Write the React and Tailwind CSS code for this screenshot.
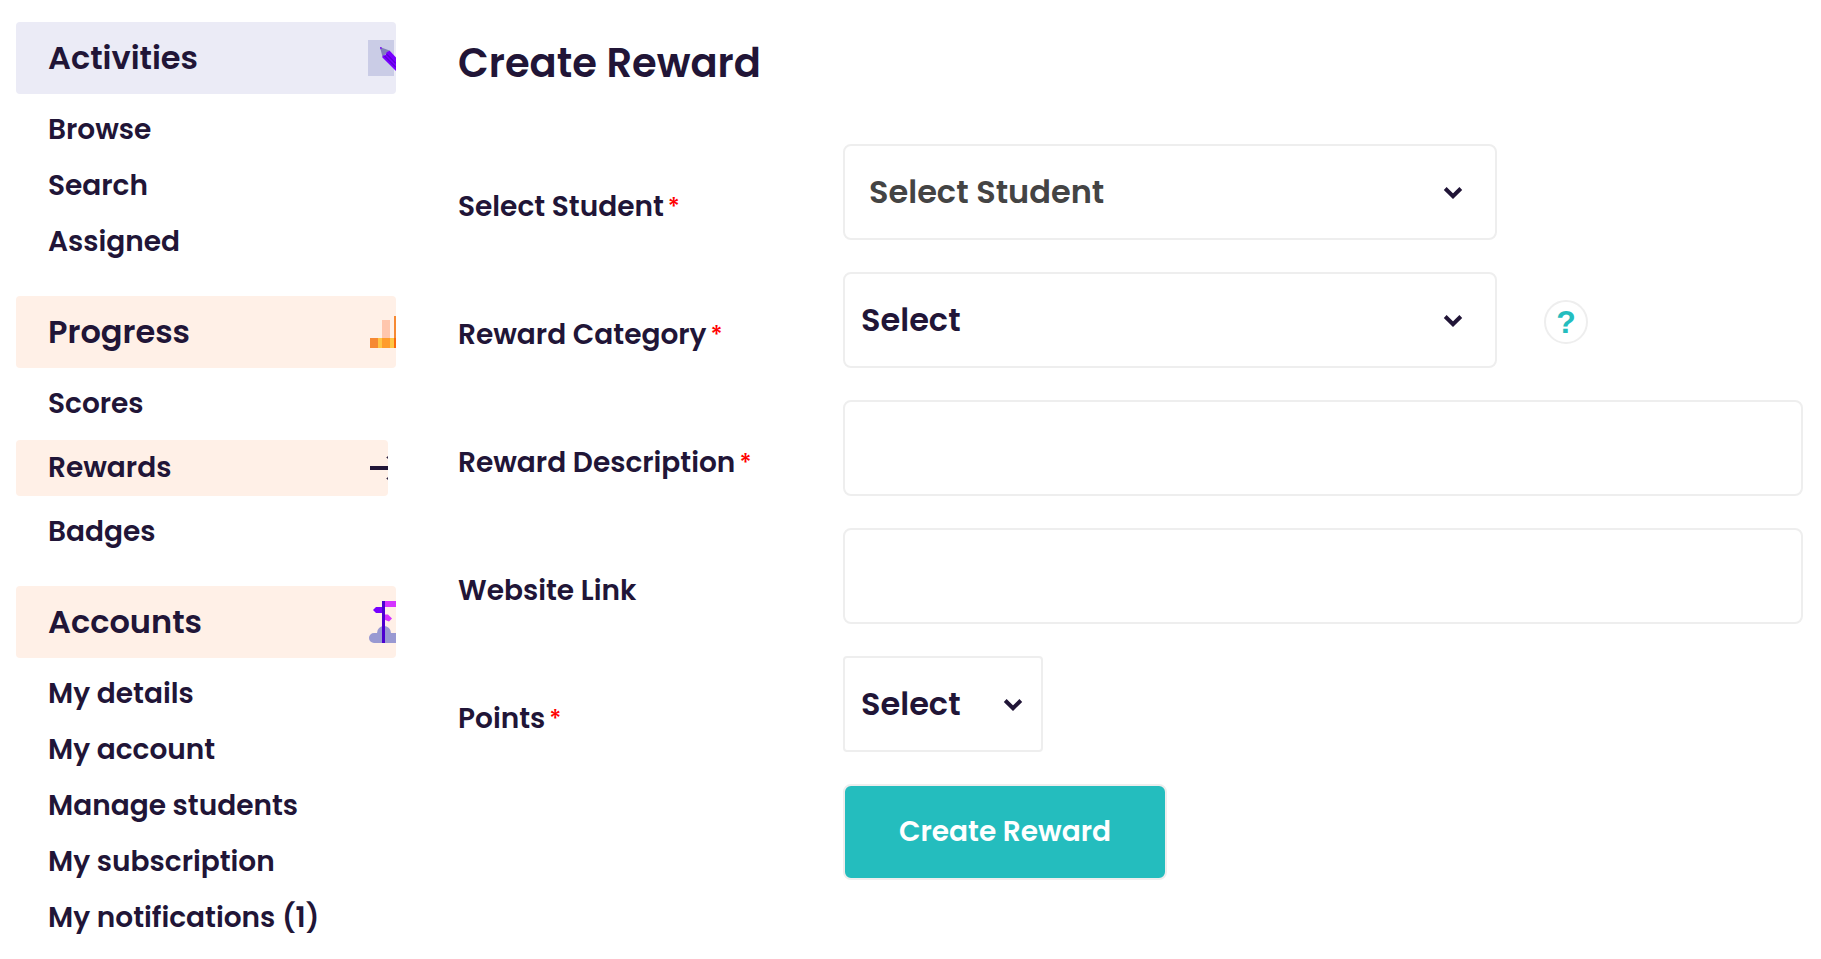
import React from "react";

function PencilIcon() {
  return (
    <svg className="h-[72px] w-7 shrink-0" viewBox="0 0 28 72" aria-hidden="true">
      <rect x="0" y="18" width="26" height="36" fill="#cacce6" />
      <path d="M12 25 21.5 28.5 14.5 35Z" fill="#8080b8" />
      <path d="M12 25 14.2 25.8 12.6 27.4Z" fill="#7700ff" />
      <path d="M18.5 30.5 21.5 28.5 28 35.5V49L14.2 35.2 15 33.5 17.5 33Z" fill="#7700ff" />
      <path d="M18.5 32 28 41.5M16.5 34 28 45.5" stroke="#4c00b8" strokeWidth="1" />
    </svg>
  );
}

function ChartIcon() {
  return (
    <svg className="h-[72px] w-7 shrink-0" viewBox="0 0 28 72" shapeRendering="crispEdges" aria-hidden="true">
      <rect x="2" y="42" width="26" height="10" fill="#ffc545" />
      <rect x="2" y="42" width="8" height="10" fill="#f68933" />
      <rect x="14" y="42" width="8" height="10" fill="#ff9c2c" />
      <rect x="14" y="24" width="8" height="18" fill="#ffc6ad" />
      <rect x="26" y="20" width="2" height="22" fill="#f68933" />
      <rect x="26" y="42" width="2" height="10" fill="#f9690e" />
    </svg>
  );
}

function SignpostIcon() {
  return (
    <svg className="h-[72px] w-7 shrink-0" viewBox="0 0 28 72" aria-hidden="true">
      <path d="M6 57a5 5 0 0 1 0-10h3a7 7 0 0 1 14 0h5v10Z" fill="#9999d2" />
      <rect x="17" y="15" width="11" height="6" fill="#d433ff" />
      <path d="M16 28.5 20 28.5 24 32.5 21 35.5 16 33.5Z" fill="#d433ff" />
      <path d="M15 21H8L5 24 8 27H15Z" fill="#7700ff" />
      <rect x="14" y="15" width="3" height="42" fill="#4c00d0" />
    </svg>
  );
}

function ArrowIcon() {
  return (
    <svg className="h-14 w-[18px] shrink-0" viewBox="0 0 18 56" aria-hidden="true">
      <path d="M0 26H18V30H0Z" fill="#211537" />
      <path d="M17 17.5 18 16.5V18.5ZM17 38.5 18 37.5V39.5Z" stroke="#211537" fill="#211537" />
    </svg>
  );
}

const sections = [
  { title: "Activities", tint: "bg-[#ebebf6]", Icon: PencilIcon, items: ["Browse", "Search", "Assigned"] },
  { title: "Progress", tint: "bg-[#fff0e7]", Icon: ChartIcon, items: ["Scores", "Rewards", "Badges"], active: "Rewards" },
  {
    title: "Accounts",
    tint: "bg-[#fff0e7]",
    Icon: SignpostIcon,
    items: ["My details", "My account", "Manage students", "My subscription", "My notifications (1)"],
  },
];

function Sidebar() {
  return (
    <nav className="flex w-[380px] shrink-0 flex-col gap-[26px]">
      {sections.map(({ title, tint, Icon, items, active }) => (
        <section key={title}>
          <h2 className={`flex h-[72px] items-center justify-between overflow-hidden rounded pl-8 text-[32px] font-semibold ${tint}`}>
            {title}
            <Icon />
          </h2>
          <ul className="mt-2">
            {items.map((item) =>
              item === active ? (
                <li key={item} className="my-2 mr-2">
                  <a href="#" aria-current="page" className="flex h-14 items-center justify-between overflow-hidden rounded bg-[#fff0e7] pl-8">
                    {item}
                    <ArrowIcon />
                  </a>
                </li>
              ) : (
                <li key={item}>
                  <a href="#" className="flex h-14 items-center pl-8">
                    {item}
                  </a>
                </li>
              )
            )}
          </ul>
        </section>
      ))}
    </nav>
  );
}

function Row({ label, id, required, children }) {
  return (
    <div className="flex items-center">
      <label htmlFor={id} className="w-[385px] shrink-0 pt-[30px]">
        {label}
        {required && <span className="ml-1 text-2xl font-medium text-[#ff0000]">*</span>}
      </label>
      {children}
    </div>
  );
}

function SelectBox({ id, text, box, field, chevron }) {
  return (
    <div className={`relative ${box}`}>
      <select id={id} className={`h-24 w-full appearance-none border-2 border-[#eeeeee] bg-white text-[32px] font-semibold ${field}`}>
        <option>{text}</option>
      </select>
      <svg className={`pointer-events-none absolute top-[43px] h-3 w-5 ${chevron}`} viewBox="0 0 20 12" fill="none" aria-hidden="true">
        <path d="M2.2 1.5 10 9.2 17.8 1.5" stroke="#211537" strokeWidth="4" />
      </svg>
    </div>
  );
}

const inputClass = "h-24 min-w-0 flex-1 rounded-lg border-2 border-[#eeeeee] bg-white px-4 text-[32px] font-semibold";

export default function App() {
  return (
    <div className="flex gap-[62px] bg-white pt-[22px] pr-[18px] pb-[13px] pl-4 font-['Poppins','Inter',sans-serif] text-[28px] leading-10 font-semibold text-[#211537]">
      <Sidebar />
      <main className="min-w-0 flex-1 pt-4">
        <h1 className="text-[40px] leading-[50px] font-semibold">Create Reward</h1>
        <form className="mt-14 flex flex-col gap-8" onSubmit={(e) => e.preventDefault()}>
          <Row label="Select Student" id="student" required>
            <SelectBox id="student" text="Select Student" box="w-[654px]" field="rounded-lg pl-6 text-[#444444]" chevron="right-[34px]" />
          </Row>
          <Row label="Reward Category" id="category" required>
            <SelectBox id="category" text="Select" box="w-[654px]" field="rounded-lg pl-4" chevron="right-[34px]" />
            <button
              type="button"
              aria-label="Help"
              className="mt-1 ml-[47px] flex size-11 items-center justify-center rounded-full border-2 border-[#eeeeee] font-['Liberation_Sans',sans-serif] text-[32px] font-bold text-[#24bdbe]"
            >
              ?
            </button>
          </Row>
          <Row label="Reward Description" id="description" required>
            <input id="description" type="text" className={inputClass} />
          </Row>
          <Row label="Website Link" id="link">
            <input id="link" type="url" className={inputClass} />
          </Row>
          <Row label="Points" id="points" required>
            <SelectBox id="points" text="Select" box="w-[200px]" field="rounded pl-4" chevron="right-5" />
          </Row>
          <button type="submit" className="ml-[385px] h-24 w-[324px] rounded-lg border-2 border-[#eeeeee] bg-[#24bdbe] font-semibold text-white">
            Create Reward
          </button>
        </form>
      </main>
    </div>
  );
}
